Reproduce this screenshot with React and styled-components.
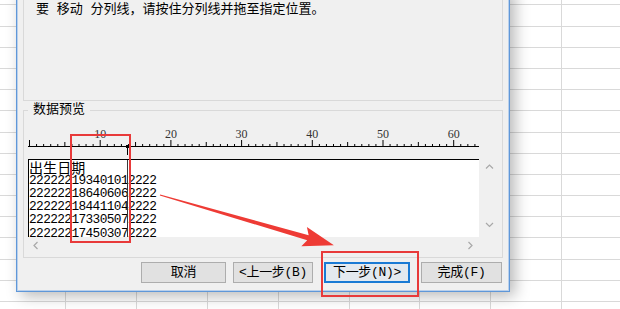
import React from "react";
import styled, { createGlobalStyle } from "styled-components";

const GlobalStyle = createGlobalStyle`
  html, body {
    margin: 0;
    padding: 0;
    background: #fff;
  }
  body {
    font-family: "Liberation Mono", "Noto Sans CJK SC", monospace;
    color: #000;
  }
`;

const Screen = styled.div`
  position: relative;
  width: 620px;
  height: 309px;
  overflow: hidden;
  background: #fff;
`;

/* spreadsheet behind the dialog */
const Sheet = styled.div`
  display: grid;
  grid-template-columns: repeat(10, 70.9px);
  grid-auto-rows: 21.2px;
  margin: -15.8px 0 0 -4.9px;
`;

const Cell = styled.div`
  border-right: 1px solid #d9d9d9;
  border-bottom: 1px solid #d9d9d9;
`;

const Dialog = styled.div`
  position: absolute;
  left: 16px;
  top: -12px;
  width: 494px;
  box-sizing: border-box;
  display: flex;
  flex-direction: column;
  padding: 5px 6px 8px 6px;
  background: #f0f0f0;
  border: 1px solid #5f97d8;
  box-shadow: 5px 4px 14px rgba(0, 0, 0, 0.28), inset 0 0 0 1px #b9d0ec;
`;

const Instructions = styled.div`
  height: 107px;
  box-sizing: border-box;
  padding: 7px 12px;
  border: 1px solid #d9d9d9;
  font-size: 13px;
  line-height: 16px;
  white-space: pre;
`;

const Group = styled.fieldset`
  margin: 1px 0 0 0;
  padding: 0 2px 3px 4px;
  min-width: 0;
  border: 1px solid #d9d9d9;
`;

const GroupLabel = styled.legend`
  padding: 0 5px;
  font-size: 13px;
  line-height: 16px;
`;

const RulerSvg = styled.svg`
  display: block;
  width: 452px;
  height: 41px;
`;

const Preview = styled.div`
  display: grid;
  grid-template-columns: 451px 20px;
  grid-template-rows: 78px 17px;
`;

const DataBox = styled.div`
  position: relative;
  overflow: hidden;
  box-sizing: border-box;
  background: #fff;
  border-top: 1px solid #000;
  border-left: 1px solid #000;
`;

const HeaderLine = styled.div`
  height: 13.6px;
  font-family: "Noto Sans CJK SC", sans-serif;
  font-size: 14px;
  line-height: 14px;
  letter-spacing: 0.1px;
`;

const DataLine = styled.div`
  height: 13.3px;
  font-family: "Liberation Mono", monospace;
  font-size: 12.8px;
  line-height: 13.3px;
  letter-spacing: -0.61px;
  white-space: pre;
`;

const BreakLine = styled.div`
  position: absolute;
  top: 0;
  bottom: 0;
  left: ${(p) => p.$left}px;
  width: 1px;
  background: #3a3a3a;
`;

const VScroll = styled.div`
  display: flex;
  flex-direction: column;
  justify-content: space-between;
  padding-bottom: 3px;
`;

const HScroll = styled.div`
  display: flex;
  justify-content: space-between;
`;

const ArrowButton = styled.div`
  display: flex;
  align-items: center;
  justify-content: center;
  width: ${(p) => p.$w}px;
  height: 17px;
`;

const ButtonRow = styled.div`
  display: flex;
  justify-content: flex-end;
  margin-top: 4px;
  padding-right: 1px;
`;

const Button = styled.button`
  width: ${(p) => p.$w}px;
  height: 21px;
  margin: 0 0 0 ${(p) => p.$gap}px;
  padding: 0;
  box-sizing: border-box;
  font-family: "Liberation Mono", "Noto Sans CJK SC", monospace;
  font-size: 13px;
  line-height: 17px;
  letter-spacing: -0.3px;
  color: #000;
  background: ${(p) => (p.$primary ? "#e3e9ef" : "#e1e1e1")};
  border: ${(p) => (p.$primary ? "2px solid #1a7ad4" : "1px solid #adadad")};
  white-space: pre;
`;

const Highlight = styled.div`
  position: absolute;
  left: ${(p) => p.$x}px;
  top: ${(p) => p.$y}px;
  width: ${(p) => p.$w}px;
  height: ${(p) => p.$h}px;
  box-sizing: border-box;
  border: 2.5px solid #e83a3a;
`;

const Overlay = styled.svg`
  position: absolute;
  left: 0;
  top: 0;
  width: 620px;
  height: 309px;
  pointer-events: none;
`;

const CHAR = 7.07;

const rows = [
  "222222193401012222",
  "222222186406062222",
  "222222184411042222",
  "222222173305072222",
  "222222174503072222",
];

const Chevron = ({ dir }) => {
  const pts = {
    up: "1,5.5 4.5,2 8,5.5",
    down: "1,2 4.5,5.5 8,2",
    left: "5.5,1 2,4.5 5.5,8",
    right: "2.5,1 6,4.5 2.5,8",
  }[dir];
  return (
    <svg width="9" height="9" viewBox="0 0 9 9">
      <polyline points={pts} fill="none" stroke="#a8a8a8" strokeWidth="1.2" />
    </svg>
  );
};

const Ruler = () => {
  const ticks = [];
  for (let i = 0; i <= 63; i++) {
    const x = 1.5 + i * CHAR;
    const h = i % 10 === 0 ? 6 : i % 5 === 0 ? 4 : 2;
    ticks.push(<line key={i} x1={x} x2={x} y1={28 - h} y2={28} stroke="#000" strokeWidth="1" />);
  }
  const labels = [10, 20, 30, 40, 50, 60];
  return (
    <RulerSvg viewBox="0 0 452 41">
      <line x1="0" x2="451" y1="28.5" y2="28.5" stroke="#000" strokeWidth="1" />
      {ticks}
      {labels.map((n) => (
        <text
          key={n}
          x={1.5 + n * CHAR}
          y="20"
          textAnchor="middle"
          fontFamily="Liberation Serif, serif"
          fontSize="12"
          fill="#333"
        >
          {n}
        </text>
      ))}
      <rect x="98" y="27" width="3" height="3" fill="#000" />
      <line x1="99.5" x2="99.5" y1="29" y2="37" stroke="#000" strokeWidth="1" />
    </RulerSvg>
  );
};

const Arrow = () => {
  const L = 181;
  return (
    <Overlay viewBox="0 0 620 309">
      <g transform="translate(160 195) rotate(16.1)">
        <polygon
          points={`0,-0.6 ${L - 27},-2.6 ${L - 31},-10 ${L},0 ${L - 31},10 ${L - 27},2.6 0,0.6`}
          fill="#ee3b35"
        />
      </g>
    </Overlay>
  );
};

export default function App() {
  const cells = Array.from({ length: 160 });
  return (
    <Screen>
      <GlobalStyle />
      <Sheet>
        {cells.map((_, i) => (
          <Cell key={i} />
        ))}
      </Sheet>

      <Dialog>
        <Instructions>要 移动 分列线，请按住分列线并拖至指定位置。</Instructions>
        <Group>
          <GroupLabel>数据预览</GroupLabel>
          <Ruler />
          <Preview>
            <DataBox>
              <HeaderLine>出生日期</HeaderLine>
              {rows.map((r) => (
                <DataLine key={r}>{r}</DataLine>
              ))}
              <BreakLine $left={98} />
            </DataBox>
            <VScroll>
              <ArrowButton $w={20}>
                <Chevron dir="up" />
              </ArrowButton>
              <ArrowButton $w={20}>
                <Chevron dir="down" />
              </ArrowButton>
            </VScroll>
            <HScroll>
              <ArrowButton $w={17}>
                <Chevron dir="left" />
              </ArrowButton>
              <ArrowButton $w={17}>
                <Chevron dir="right" />
              </ArrowButton>
            </HScroll>
          </Preview>
        </Group>
        <ButtonRow>
          <Button $w={85} $gap={0}>取消</Button>
          <Button $w={80} $gap={7}>{"<上一步(B)"}</Button>
          <Button $w={86} $gap={11} $primary>{"下一步(N)>"}</Button>
          <Button $w={81} $gap={11}>完成(F)</Button>
        </ButtonRow>
      </Dialog>

      <Highlight $x={70} $y={134} $w={61} $h={109} />
      <Highlight $x={321} $y={251} $w={98} $h={46} />
      <Arrow />
    </Screen>
  );
}
